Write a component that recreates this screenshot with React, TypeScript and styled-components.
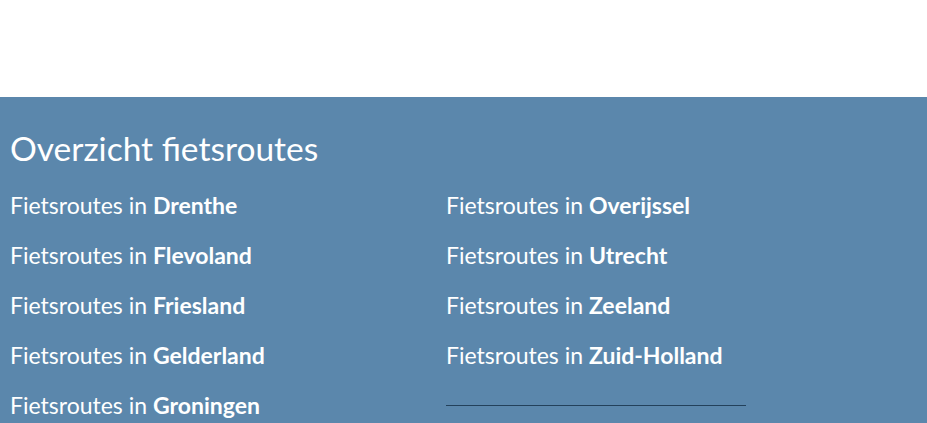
import styled, { createGlobalStyle } from 'styled-components'

const GlobalStyle = createGlobalStyle`
  html, body {
    margin: 0;
    padding: 0;
    background: #ffffff;
    font-family: Lato, "Open Sans", sans-serif;
  }
`;

const TopSpace = styled.div`
  height: 97px;
  background: #ffffff;
`;

const Section = styled.section`
  background-color: #5b87ac;
  color: #ffffff;
  padding: 28px 10px 40px;
`;

const Title = styled.h2`
  margin: 0 0 20px;
  font-size: 33.5px;
  font-weight: 400;
  line-height: 46px;
`;

const Columns = styled.div`
  display: grid;
  grid-template-columns: 436px 1fr;
`;

const List = styled.ul`
  list-style: none;
  margin: 0;
  padding: 0;
`;

const Item = styled.li`
  height: 50px;
  font-size: 23px;
  line-height: 28px;
`;

const Link = styled.a`
  color: #ffffff;
  text-decoration: none;

  strong {
    font-weight: 700;
  }
`;

const Divider = styled.hr`
  width: 300px;
  margin: 14px 0 0;
  border: none;
  border-top: 1px solid #23415b;
`;

const left = ['Drenthe', 'Flevoland', 'Friesland', 'Gelderland', 'Groningen']
const right = ['Overijssel', 'Utrecht', 'Zeeland', 'Zuid-Holland']

const App = () => {
  return (
    <>
      <GlobalStyle />
      <TopSpace />
      <Section>
        <Title>Overzicht fietsroutes</Title>
        <Columns>
          <List>
            {left.map((p) => (
              <Item key={p}>
                <Link href="#">Fietsroutes in <strong>{p}</strong></Link>
              </Item>
            ))}
          </List>
          <List>
            {right.map((p) => (
              <Item key={p}>
                <Link href="#">Fietsroutes in <strong>{p}</strong></Link>
              </Item>
            ))}
            <Divider />
          </List>
        </Columns>
      </Section>
    </>
  )
}

export default App
